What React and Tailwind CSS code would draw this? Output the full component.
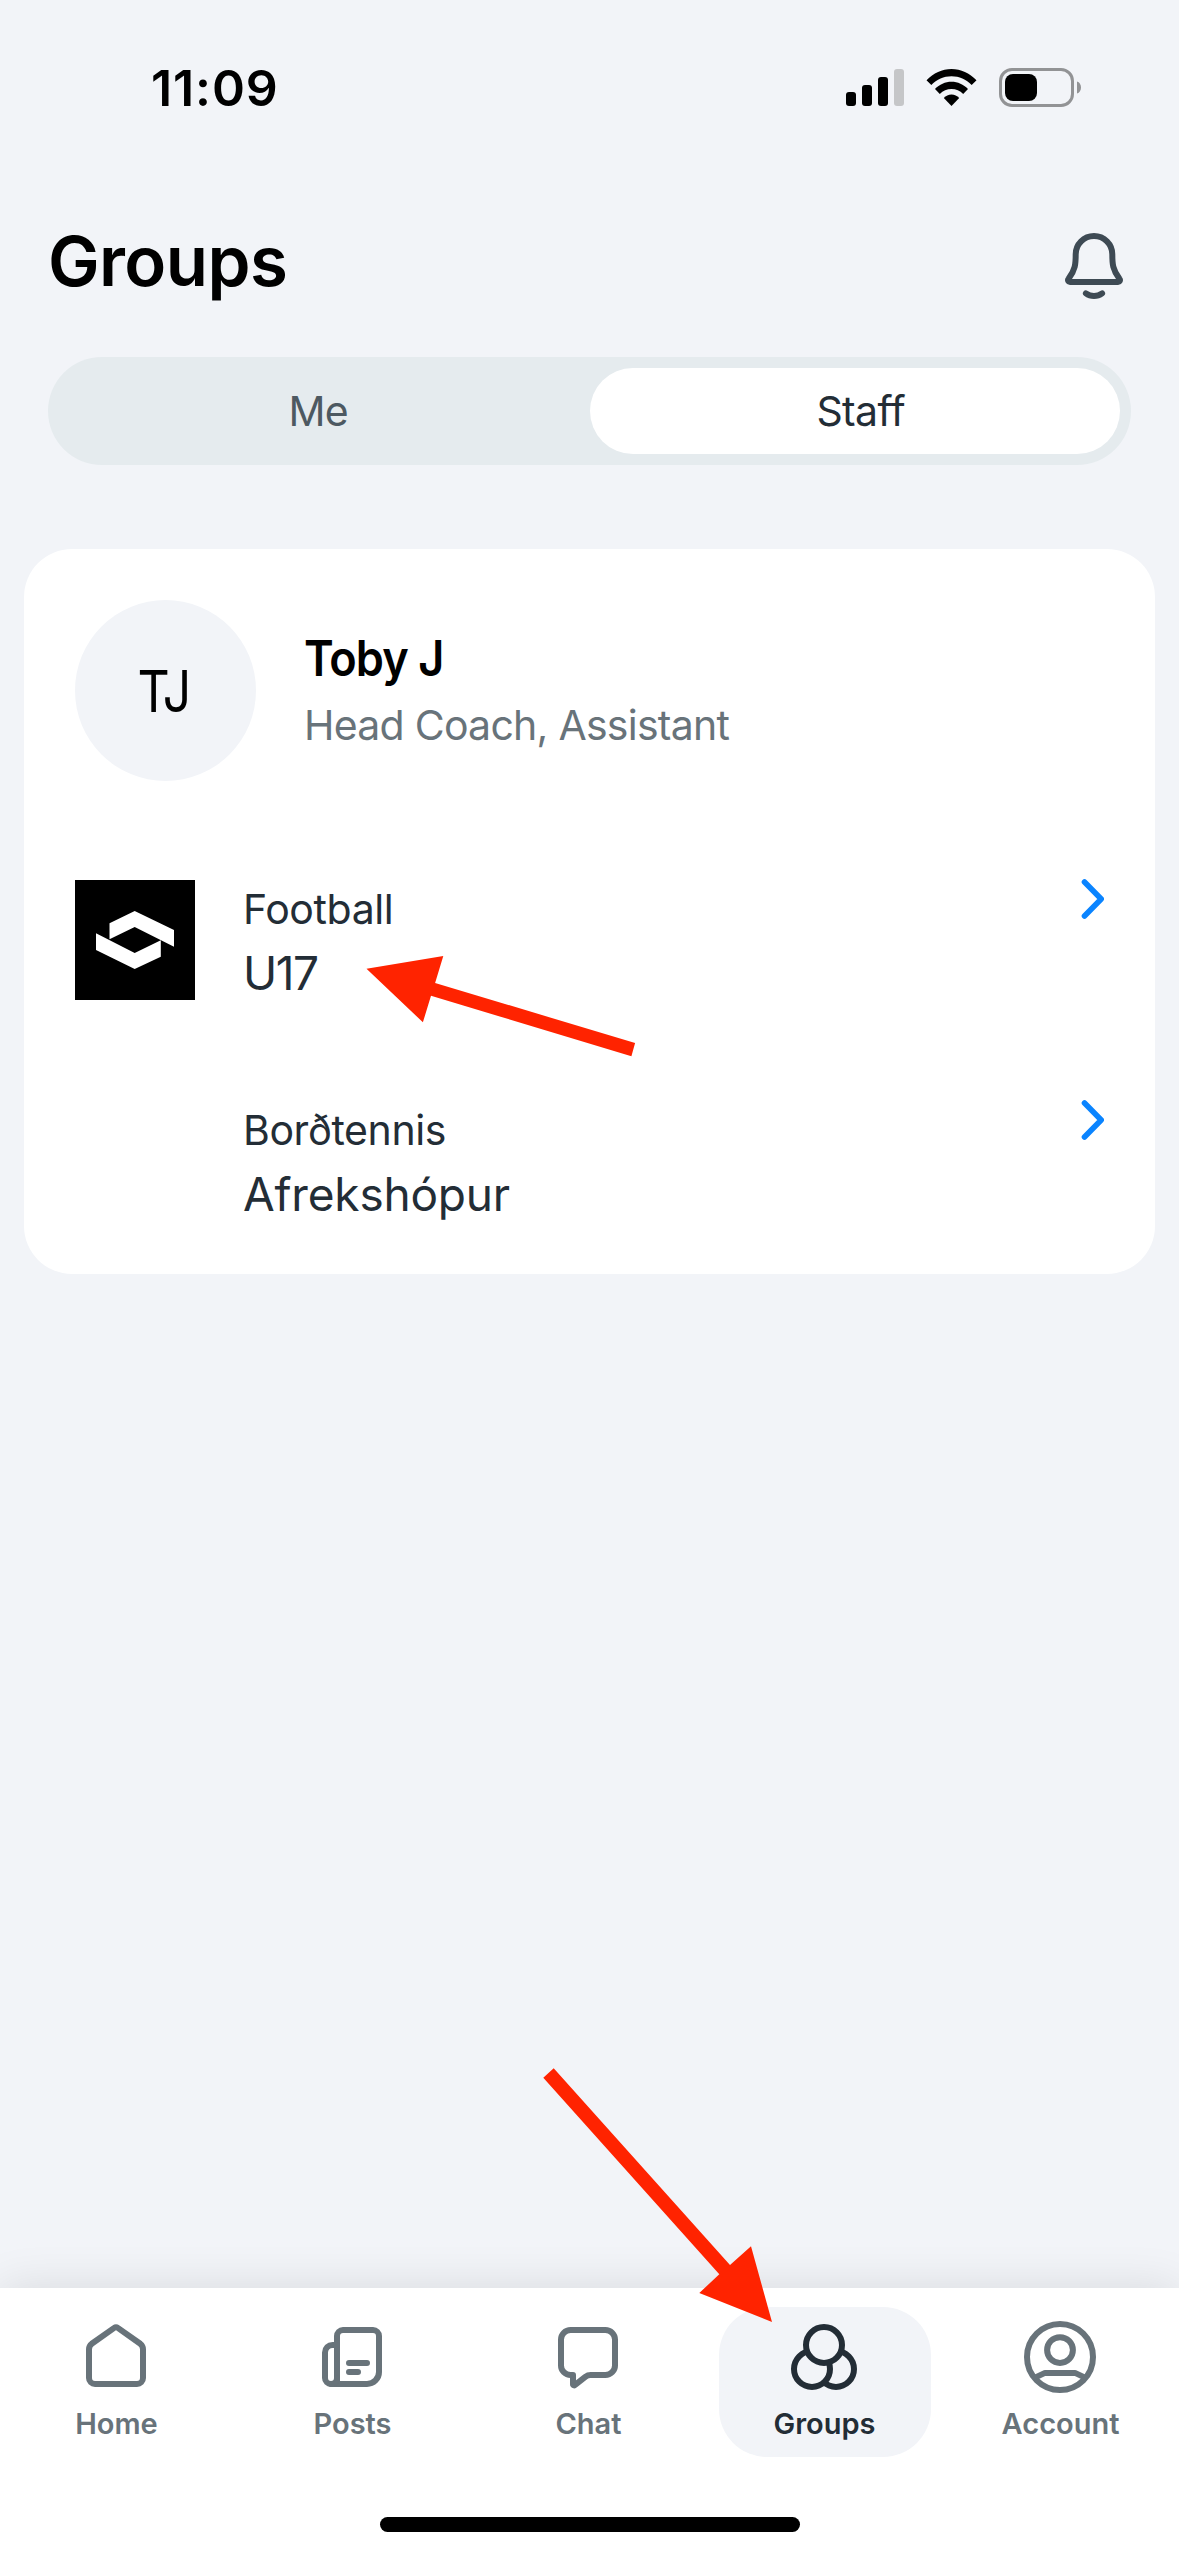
import { useState } from 'react';

const segments = ['Me', 'Staff'];

const groups = [
  { id: 1, sport: 'Football', name: 'U17', nameClass: 'tracking-[-1.5px]', hasLogo: true },
  { id: 2, sport: 'Borðtennis', name: 'Afrekshópur', nameClass: 'tracking-[-0.2px]', hasLogo: false },
];

const HomeIcon = () => (
  <>
    <path d="M3 9.4a2.3 2.3 0 0 1 .9-1.8l7.5-5.3a1 1 0 0 1 1.2 0l7.5 5.3a2.3 2.3 0 0 1 .9 1.8V19a2 2 0 0 1-2 2H5a2 2 0 0 1-2-2z" />
  </>
);

const PostsIcon = () => (
  <>
    <path d="M7 21V5a2 2 0 0 1 2-2h10a2 2 0 0 1 2 2v12a4 4 0 0 1-4 4H5" />
    <path d="M7 8H5.5A2.5 2.5 0 0 0 3 10.5V19a2 2 0 0 0 4 0" />
    <path d="M11 14h6M11 17h3" />
  </>
);

const ChatIcon = () => (
  <>
    <path d="M3 6.2A3.2 3.2 0 0 1 6.2 3h11.6A3.2 3.2 0 0 1 21 6.2v8.6a3.2 3.2 0 0 1-3.2 3.2h-4.9a3 3 0 0 0-1.8.6l-3.4 2.7a.4.4 0 0 1-.7-.3V18h-.8A3.2 3.2 0 0 1 3 14.8z" />
  </>
);

const GroupsIcon = () => (
  <g className="fill-[#f2f4f8]">
    <circle cx="16" cy="16" r="6" />
    <circle cx="8" cy="16" r="6" />
    <circle cx="12" cy="8" r="6" />
  </g>
);

const AccountIcon = () => (
  <>
    <circle cx="12" cy="12" r="11" />
    <circle cx="12" cy="9.7" r="4.3" />
    <path d="M4 18.7l3-1.4h10l3 1.4" />
  </>
);

const tabs = [
  { label: 'Home', Icon: HomeIcon },
  { label: 'Posts', Icon: PostsIcon },
  { label: 'Chat', Icon: ChatIcon },
  { label: 'Groups', Icon: GroupsIcon },
  { label: 'Account', Icon: AccountIcon },
];

const StatusBar = () => (
  <div className="h-[176px] flex items-center justify-between pl-[151px] pr-[98px]">
    <span className="text-[50px] leading-none font-semibold tracking-[0.9px] text-black">11:09</span>
    <div className="mb-[1px] flex items-center">
      <svg width="58" height="37" viewBox="0 0 58 37">
        <rect x="0" y="23" width="10" height="14" rx="3" />
        <rect x="16" y="16" width="10" height="21" rx="3" />
        <rect x="32" y="8" width="10" height="29" rx="3" />
        <rect x="48" y="0" width="10" height="37" rx="3" fill="#c5c6c8" />
      </svg>
      <svg className="ml-[22px]" width="51" height="37" viewBox="0 0 51 37">
        <path d="M0.5 11.2C7.5 4 16 0 25.5 0S43.5 4 50.5 11.2L45.7 16C40.2 10.3 33.2 7.2 25.5 7.2S10.8 10.3 5.3 16z" />
        <path d="M9 20C13.5 15.4 19.2 12.8 25.5 12.8S37.5 15.4 42 20L37.2 24.9C34 21.6 30 19.9 25.5 19.9S17 21.6 13.8 24.9z" />
        <path d="M17.8 28.9C19.8 26.8 22.5 25.5 25.5 25.5S31.2 26.8 33.2 28.9L25.5 37z" />
      </svg>
      <svg className="ml-[22px]" width="82" height="39" viewBox="0 0 82 39">
        <rect x="1.5" y="1.5" width="72" height="36" rx="11.5" fill="none" stroke="#929395" strokeWidth="3" />
        <rect x="6" y="6" width="32" height="27" rx="8" />
        <path d="M78 13.5c2.6.7 4 3.2 4 6s-1.4 5.3-4 6z" fill="#929395" />
      </svg>
    </div>
  </div>
);

const GroupRow = ({ group }) => (
  <div className="h-[221px] flex items-start">
    <div className="size-[120px] shrink-0">
      {group.hasLogo && (
        <svg width="120" height="120" viewBox="0 0 120 120">
          <rect width="120" height="120" fill="#000" />
          <path d="M34.5 43.3L59.7 31L99 50v16.7L59.7 47L34.5 59.3z" fill="#fff" />
          <path d="M21 53.3L59.7 73l26.1-12.7v16.4L59.7 89L21 70z" fill="#fff" />
        </svg>
      )}
    </div>
    <div className="ml-12 flex-1 text-[#232d36]">
      <p className="mt-1 h-[51px] text-[41px] leading-[51px] tracking-[-0.4px]">{group.sport}</p>
      <p className={`mt-[10px] h-[56px] text-[46px] leading-[56px] ${group.nameClass}`}>{group.name}</p>
    </div>
    <svg className="mt-[-1px] mr-[51px]" width="26" height="40" viewBox="0 0 26 40" fill="none" stroke="#0a84ff" strokeWidth="5.6" strokeLinecap="round" strokeLinejoin="round">
      <path d="M6.5 3l16.7 17L6.5 37" />
    </svg>
  </div>
);

const App = () => {
  const [segment, setSegment] = useState('Staff');
  const [activeTab, setActiveTab] = useState('Groups');

  return (
    <div className="relative w-[1179px] h-[2556px] flex flex-col overflow-hidden bg-[#f2f4f8] font-['Inter',sans-serif]">
      <StatusBar />

      <header className="h-[170px] flex items-center justify-between pl-12 pr-[49px]">
        <h1 className="text-[69px] leading-none font-semibold tracking-[-0.6px] text-black">Groups</h1>
        <svg className="mt-[9px]" width="72" height="72" viewBox="0 0 24 24" fill="none" stroke="#3e4a54" strokeWidth="2" strokeLinecap="round" strokeLinejoin="round">
          <path d="M12 2a6.1 6.1 0 0 0-6.1 6.1c0 3.2-.1 5.2-2.4 8.2a.64.64 0 0 0 .5 1.05h16a.64.64 0 0 0 .5-1.05c-2.3-3-2.4-5-2.4-8.2A6.1 6.1 0 0 0 12 2z" />
          <path d="M9.3 21.1c1.6 1.2 3.8 1.2 5.4 0" />
        </svg>
      </header>

      <div className="mt-[11px] mx-12 h-[108px] rounded-full bg-[#e5ebee] flex p-[11px]">
        {segments.map((item) => (
          <button
            key={item}
            onClick={() => setSegment(item)}
            className={`flex-1 rounded-full text-[41px] leading-none tracking-[-0.6px] first:pr-3 last:pl-3 ${segment === item ? 'bg-white text-[#232d36]' : 'text-[#4d5961]'}`}
          >
            {item}
          </button>
        ))}
      </div>

      <div className="mt-[84px] mx-6 h-[725px] rounded-[48px] bg-white pl-[51px] overflow-hidden">
        <div className="mt-[51px] flex items-center">
          <div className="size-[181px] rounded-full bg-[#f2f4f8] flex items-center justify-center">
            <span className="pr-[6px] text-[58px] leading-none tracking-[-3px] scale-x-[0.86] text-black">TJ</span>
          </div>
          <div className="ml-12">
            <p className="mt-[1px] h-[60px] text-[49px] leading-[60px] font-semibold tracking-[-1px] origin-left scale-x-[0.92] text-black">Toby J</p>
            <p className="mt-[7px] h-[58px] text-[41px] leading-[58px] tracking-[-0.75px] text-[#68737a]">Head Coach, Assistant</p>
          </div>
        </div>
        <div className="mt-[99px]">
          {groups.map((group) => (
            <GroupRow key={group.id} group={group} />
          ))}
        </div>
      </div>

      <nav className="mt-auto h-[268px] bg-white shadow-[0_0_44px_rgba(0,0,0,0.11)] flex flex-col items-center">
        <div className="mt-[19px] mr-[1px] flex gap-6">
          {tabs.map(({ label, Icon }) => (
            <button
              key={label}
              onClick={() => setActiveTab(label)}
              className={`w-[212px] h-[150px] rounded-[48px] flex flex-col items-center pt-[14px] ${activeTab === label ? 'bg-[#f2f4f8] text-[#232d36]' : 'text-[#68737a]'}`}
            >
              <svg className="mr-[2px]" width="72" height="72" viewBox="0 0 24 24" fill="none" stroke="currentColor" strokeWidth="2" strokeLinecap="round" strokeLinejoin="round">
                <Icon />
              </svg>
              <span className="mt-[12px] mr-[1px] text-[29px] leading-[37px] font-semibold">{label}</span>
            </button>
          ))}
        </div>
        <div className="mt-[60px] w-[420px] h-[15px] rounded-full bg-black" />
      </nav>

      {/* callout arrows */}
      <svg className="absolute left-[366px] top-[956px]" width="270" height="102" viewBox="366 956 270 102" fill="#ff2300">
        <path d="M366.5 968.7L443.3 956L435.1 983L635.1 1043L631.4 1056.3L431 995.7L422.9 1022.3z" />
      </svg>
      <svg className="absolute left-[543px] top-[2068px]" width="230" height="255" viewBox="543 2068 230 255" fill="#ff2300">
        <path d="M543.3 2077.7L553.7 2068.3L730 2265L751 2246.3L772 2322L699.3 2293L719.3 2274.3z" />
      </svg>
    </div>
  );
};

export default App;
